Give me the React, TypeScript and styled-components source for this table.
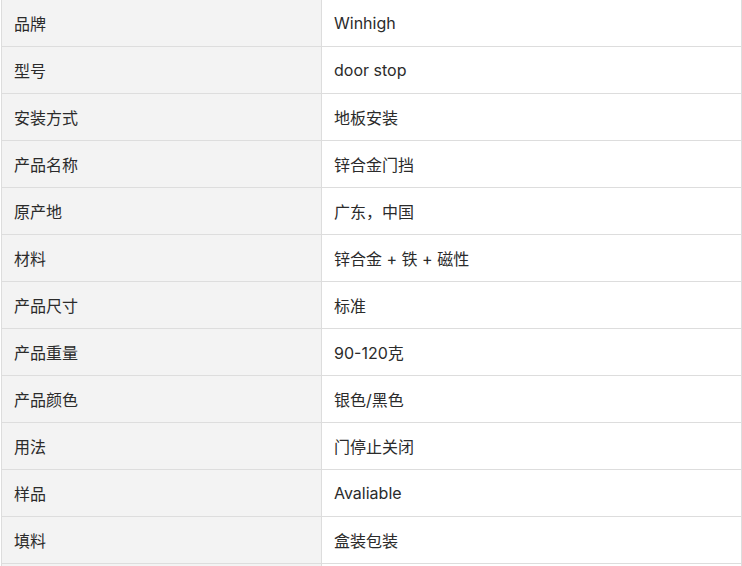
import React from "react";
import styled, { createGlobalStyle } from "styled-components";

const Global = createGlobalStyle`
  html, body { margin: 0; padding: 0; background: #ffffff; }
  body { font-family: Inter, "Noto Sans CJK SC", sans-serif; }
`;

const Page = styled.div`
  padding-left: 1px;
  width: 742px;
  box-sizing: border-box;
`;

const Table = styled.div`
  display: flex;
  flex-direction: column;
`;

const Row = styled.div`
  display: grid;
  grid-template-columns: 321px 420px;
  height: 47px;
  box-sizing: border-box;
  border-bottom: 1px solid #dddddd;
`;

const Cell = styled.div<{ $label?: boolean }>`
  display: flex;
  align-items: center;
  box-sizing: border-box;
  padding: 0 12px 1px;
  border-right: 1px solid #dddddd;
  border-left: ${(p) => (p.$label ? "1px solid #dddddd" : "none")};
  background: ${(p) => (p.$label ? "#f3f3f3" : "#ffffff")};
  color: #2b2b2b;
  font-size: 16px;
  white-space: nowrap;
`;

const rows: [string, string][] = [
  ["品牌", "Winhigh"],
  ["型号", "door stop"],
  ["安装方式", "地板安装"],
  ["产品名称", "锌合金门挡"],
  ["原产地", "广东，中国"],
  ["材料", "锌合金 + 铁 + 磁性"],
  ["产品尺寸", "标准"],
  ["产品重量", "90-120克"],
  ["产品颜色", "银色/黑色"],
  ["用法", "门停止关闭"],
  ["样品", "Avaliable"],
  ["填料", "盒装包装"],
  ["", ""],
];

export default function App() {
  return (
    <>
      <Global />
      <Page>
        <Table>
          {rows.map(([k, v], i) => (
            <Row key={i}>
              <Cell $label>{k}</Cell>
              <Cell>{v}</Cell>
            </Row>
          ))}
        </Table>
      </Page>
    </>
  );
}
